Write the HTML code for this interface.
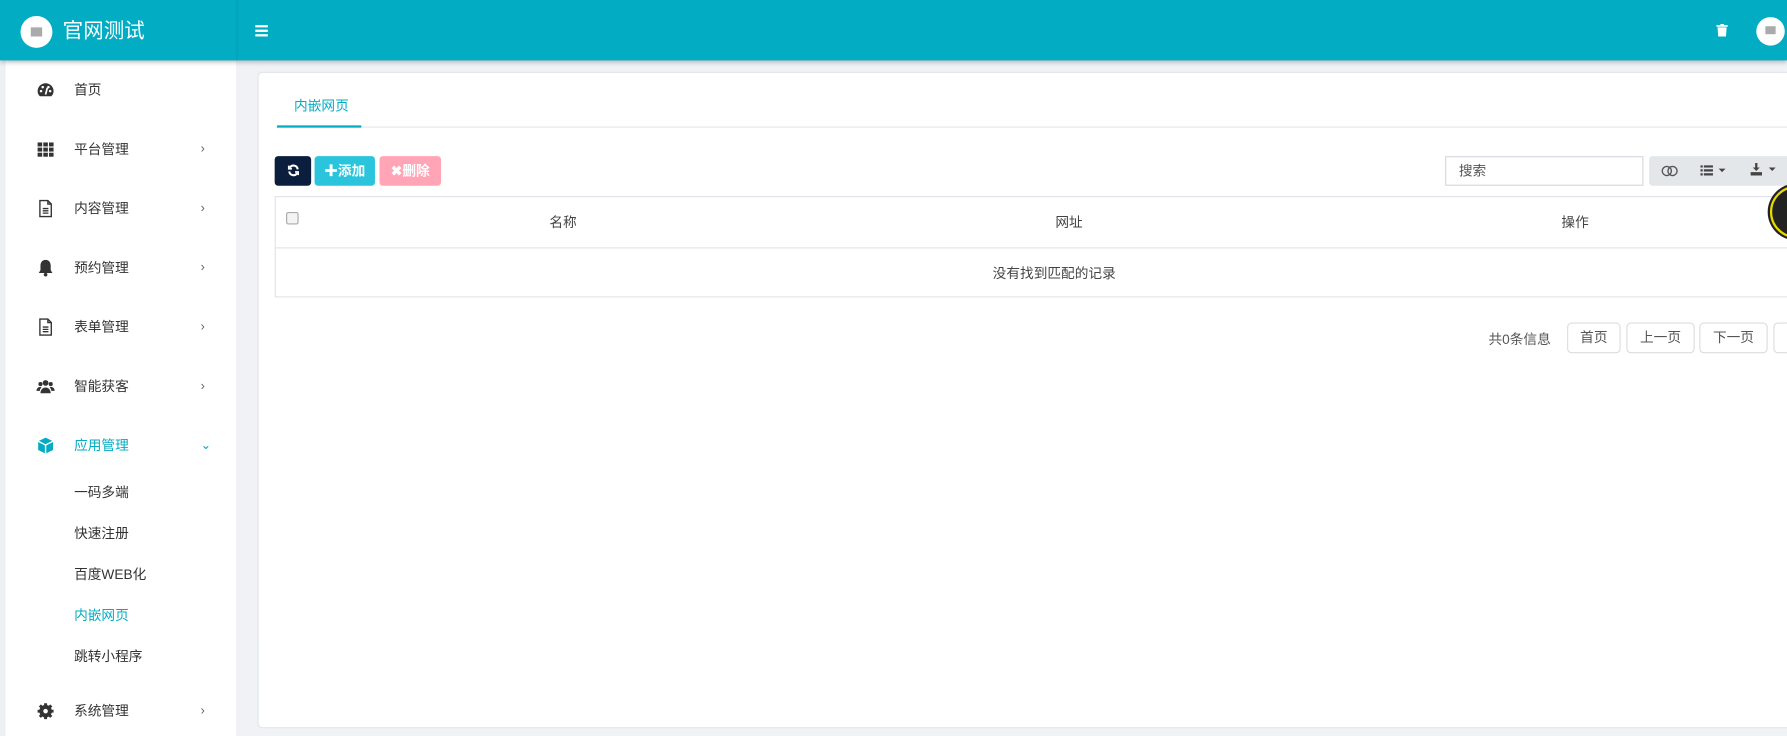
<!DOCTYPE html>
<html><head><meta charset="utf-8"><style>
*{box-sizing:border-box;margin:0;padding:0}
html,body{width:1787px;height:736px;overflow:hidden;background:#f0f2f5;font-family:"Liberation Sans","Noto Sans CJK SC",sans-serif}
#w{position:absolute;left:0;top:0;width:1568px;height:646px;transform:scale(1.1397);transform-origin:0 0;overflow:hidden;background:#f0f2f5}
.abs{position:absolute}
#hdr{left:0;top:0;width:1568px;height:53px;background:#02acc3;box-shadow:0 2px 4px rgba(0,0,0,.25)}
#side{left:5px;top:53px;width:202px;height:593px;background:#fff}
.it{position:absolute;left:0;width:202px;font-size:12px;color:#333}
.it .ic{position:absolute;left:27px;top:-8px;width:16px;height:16px}
.it .t{position:absolute;left:60px;top:-8px;line-height:16px}
.it .ar{position:absolute;left:171px;top:-8px;line-height:16px;color:#666;font-size:11px}
.sub{position:absolute;left:60px;font-size:12px;color:#333;line-height:16px}
.btn{position:absolute;top:137px;height:26px;border-radius:3px;color:#fff;font-size:12px;font-weight:bold;line-height:26px;text-align:center}
.pg{position:absolute;top:283px;height:27px;border:1px solid #ddd;border-radius:4px;background:#fff;font-size:12px;color:#555;line-height:25px;text-align:center}
</style></head><body><div id="w">
<div class="abs" style="left:0;top:0;width:5px;height:646px;background:#eef0f3"></div>
<div id="side" class="abs">
<div class="it" style="top:26px"><svg class="ic" viewBox="0 0 16 16"><path d="M8 2a7 7 0 0 0-7 7c0 2 .8 3.5 2 4.5h10c1.2-1 2-2.5 2-4.5a7 7 0 0 0-7-7z" fill="#333"/><circle cx="4" cy="9" r="1.1" fill="#fff"/><circle cx="5.5" cy="5.5" r="1.1" fill="#fff"/><circle cx="10.5" cy="5.5" r="1.1" fill="#fff"/><circle cx="12" cy="9" r="1.1" fill="#fff"/><path d="M8 12l1.5-6" stroke="#fff" stroke-width="1.5"/></svg><span class="t">首页</span></div>
<div class="it" style="top:78px"><svg class="ic" viewBox="0 0 16 16" fill="#333"><rect x="1" y="2" width="4" height="3.5"/><rect x="6" y="2" width="4" height="3.5"/><rect x="11" y="2" width="4" height="3.5"/><rect x="1" y="6.5" width="4" height="3.5"/><rect x="6" y="6.5" width="4" height="3.5"/><rect x="11" y="6.5" width="4" height="3.5"/><rect x="1" y="11" width="4" height="3.5"/><rect x="6" y="11" width="4" height="3.5"/><rect x="11" y="11" width="4" height="3.5"/></svg><span class="t">平台管理</span><span class="ar">›</span></div>
<div class="it" style="top:130px"><svg class="ic" viewBox="0 0 16 16" fill="none" stroke="#333" stroke-width="1.2"><path d="M3 1h7l3 3v11H3z M10 1v3h3 M5.5 8h5 M5.5 10h5 M5.5 12h5"/></svg><span class="t">内容管理</span><span class="ar">›</span></div>
<div class="it" style="top:182px"><svg class="ic" viewBox="0 0 16 16" fill="#333"><path d="M8 1c-3 0-4.5 2.5-4.5 5v4L2 12.5h12L12.5 10V6c0-2.5-1.5-5-4.5-5z"/><circle cx="8" cy="14" r="1.6"/></svg><span class="t">预约管理</span><span class="ar">›</span></div>
<div class="it" style="top:234px"><svg class="ic" viewBox="0 0 16 16" fill="none" stroke="#333" stroke-width="1.2"><path d="M3 1h7l3 3v11H3z M10 1v3h3 M5.5 8h5 M5.5 10h5 M5.5 12h5"/></svg><span class="t">表单管理</span><span class="ar">›</span></div>
<div class="it" style="top:286px"><svg class="ic" viewBox="0 0 16 16" fill="#333"><circle cx="8" cy="5" r="2.5"/><circle cx="3.5" cy="6" r="1.8"/><circle cx="12.5" cy="6" r="1.8"/><path d="M3.5 14c0-3 2-5 4.5-5s4.5 2 4.5 5z M0 12c0-2 1.5-3.5 3.5-3.5l1 .3c-1 1-1.5 2-1.5 3.2z M16 12c0-2-1.5-3.5-3.5-3.5l-1 .3c1 1 1.5 2 1.5 3.2z"/></svg><span class="t">智能获客</span><span class="ar">›</span></div>
<div class="it" style="top:338px;color:#03acc3"><svg class="ic" viewBox="0 0 16 16"><path d="M8 1l6.5 3.2v7.6L8 15l-6.5-3.2V4.2z" fill="#03acc3"/><path d="M1.5 4.2L8 7.4l6.5-3.2M8 7.4V15" stroke="#fff" stroke-width="1.2" fill="none"/></svg><span class="t">应用管理</span><span class="ar" style="color:#03acc3">⌄</span></div>
<div class="sub" style="top:371px">一码多端</div>
<div class="sub" style="top:407px">快速注册</div>
<div class="sub" style="top:443px">百度WEB化</div>
<div class="sub" style="top:479px;color:#03acc3">内嵌网页</div>
<div class="sub" style="top:515px">跳转小程序</div>
<div class="it" style="top:571px"><svg class="ic" viewBox="0 0 16 16"><circle cx="8" cy="8" r="5.5" fill="#333"/><g stroke="#333" stroke-width="2.6"><path d="M8 1v14M1 8h14M3 3l10 10M13 3L3 13"/></g><circle cx="8" cy="8" r="2" fill="#fff"/></svg><span class="t">系统管理</span><span class="ar">›</span></div>
</div>
<div id="hdr" class="abs">
<div class="abs" style="left:5px;top:0;width:202px;height:53px;box-shadow:1px 0 2px rgba(0,0,0,.08)"></div>
<div class="abs" style="left:18px;top:14px;width:28px;height:28px;border-radius:50%;background:#fff"><div class="abs" style="left:9px;top:10px;width:10px;height:8px;background:#aaa"></div></div>
<div class="abs" style="left:55px;top:16px;font-size:18px;color:#fff;line-height:22px">官网测试</div>
<div class="abs" style="left:224px;top:22px;width:11px;height:2px;background:#fff;box-shadow:0 4px 0 #fff,0 8px 0 #fff"></div>
<svg class="abs" style="left:1506px;top:21px" width="10" height="11" viewBox="0 0 10 11" fill="#fff"><rect x="0" y="1" width="10" height="1.5"/><rect x="3.5" y="0" width="3" height="1.5"/><path d="M1 3h8l-.6 8H1.6z"/></svg>
<div class="abs" style="left:1541px;top:15px;width:25px;height:25px;border-radius:50%;background:#fff"><div class="abs" style="left:8px;top:8px;width:9px;height:7px;background:#aaa"></div></div>
</div>
<div class="abs" style="left:226px;top:63px;width:1360px;height:576px;background:#fff;border:1px solid #e3e6ea;border-radius:4px"></div>
<div class="abs" style="left:258px;top:85px;font-size:12px;color:#03acc3;line-height:16px">内嵌网页</div>
<div class="abs" style="left:243px;top:111px;width:1325px;height:1px;background:#e3e6ea"></div>
<div class="abs" style="left:243px;top:110px;width:74px;height:2px;background:#03acc3"></div>
<div class="btn" style="left:241px;width:32px;background:#0b1e3d"><svg width="11" height="11" viewBox="0 0 12 12" style="vertical-align:-1px" fill="none" stroke="#fff" stroke-width="2"><path d="M10 5a4 4 0 0 0-7.5-1.5M2 7a4 4 0 0 0 7.5 1.5"/><path d="M1.5 1.5v3h3M10.5 10.5v-3h-3" stroke-width="1.6"/></svg></div>
<div class="btn" style="left:276px;width:53px;background:#2ac5dc">✚添加</div>
<div class="btn" style="left:333px;width:54px;background:#ffa5b6">✖删除</div>
<div class="abs" style="left:1268px;top:137px;width:174px;height:26px;border:1px solid #d5d9de;font-size:12px;color:#555;line-height:24px;padding-left:11px">搜索</div>
<div class="abs" style="left:1447px;top:137px;width:130px;height:26px;background:#e4e7ea;border-radius:3px"></div>
<svg class="abs" style="left:1457px;top:145px" width="16" height="10" viewBox="0 0 16 10" fill="none" stroke="#555" stroke-width="1.2"><circle cx="5.5" cy="5" r="4"/><circle cx="10.5" cy="5" r="4"/></svg>
<svg class="abs" style="left:1492px;top:145px" width="24" height="9" viewBox="0 0 24 9" fill="#444"><rect x="0" y="0" width="2" height="2"/><rect x="3" y="0" width="8" height="2"/><rect x="0" y="3.5" width="2" height="2"/><rect x="3" y="3.5" width="8" height="2"/><rect x="0" y="7" width="2" height="2"/><rect x="3" y="7" width="8" height="2"/><path d="M16 3h6l-3 3z"/></svg>
<svg class="abs" style="left:1536px;top:143px" width="24" height="11" viewBox="0 0 24 11" fill="#444"><path d="M4 0h2v4h2L5 7 2 4h2z M0 8h10v3H0z"/><path d="M16 4h6l-3 3z"/></svg>
<div class="abs" style="left:241px;top:172px;width:1340px;height:89px;border:1px solid #dfe3e8"></div>
<div class="abs" style="left:242px;top:217px;width:1330px;height:1px;background:#dfe3e8"></div>
<div class="abs" style="left:251px;top:186px;width:11px;height:11px;border:1px solid #aaa;border-radius:2px;background:#f4f4f4"></div>
<div class="abs" style="left:482px;top:186px;font-size:12px;color:#444">名称</div>
<div class="abs" style="left:926px;top:186px;font-size:12px;color:#444">网址</div>
<div class="abs" style="left:1370px;top:186px;font-size:12px;color:#444">操作</div>
<div class="abs" style="left:871px;top:231px;font-size:12px;color:#444">没有找到匹配的记录</div>
<div class="abs" style="left:1553px;top:163px;width:46px;height:46px;border-radius:50%;background:#222;border:2px solid #e8d800;box-shadow:0 0 0 2px #222"></div>
<div class="abs" style="left:1306px;top:289px;font-size:12px;color:#555">共0条信息</div>
<div class="pg" style="left:1375px;width:47px">首页</div>
<div class="pg" style="left:1427px;width:60px">上一页</div>
<div class="pg" style="left:1491px;width:60px">下一页</div>
<div class="pg" style="left:1556px;width:40px"></div>
</div></body></html>
